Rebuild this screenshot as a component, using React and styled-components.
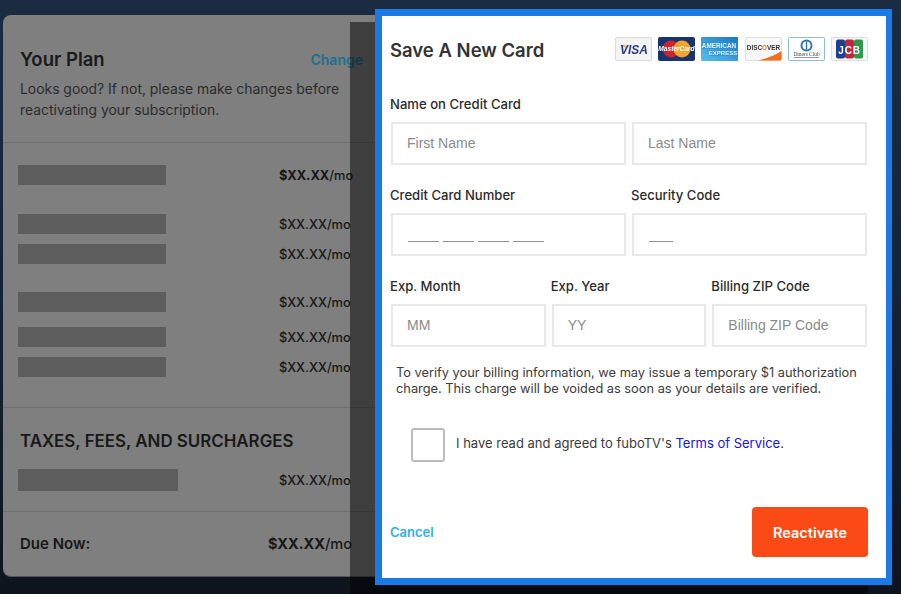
import React from "react";
import styled, { createGlobalStyle } from "styled-components";

const Global = createGlobalStyle`
  html, body {
    margin: 0;
    padding: 0;
    height: 594px;
    overflow: hidden;
    background: #131f2e;
  }
  * { box-sizing: border-box; }
`;

const Page = styled.div`
  position: relative;
  width: 901px;
  height: 594px;
  overflow: hidden;
  padding: 15px 0 0 3px;
  background: linear-gradient(180deg, #1b2c42 0%, #16243a 45%, #0d141e 100%);
  font-family: Inter, Lato, sans-serif;
`;

const PlanCard = styled.section`
  width: 400px;
  height: 562px;
  background: #7f7f7f;
  border-radius: 8px;
  border-bottom: 1px solid #555;
  color: #1b1b1b;
`;

const PlanHead = styled.div`
  height: 128px;
  padding: 29px 37px 0 17px;
  border-bottom: 1px solid #6f6f6f;
`;

const HeadRow = styled.div`
  display: flex;
  justify-content: space-between;
  align-items: center;
  height: 30px;
`;

const PlanTitle = styled.h2`
  margin: 0;
  font-size: 18.5px;
  font-weight: 600;
  color: #1a1a1a;
`;

const ChangeLink = styled.a`
  font-size: 14px;
  font-weight: 600;
  color: #1c7190;
  margin-right: 3px;
`;

const PlanNote = styled.p`
  margin: 5px 0 0;
  width: 340px;
  font-size: 13.9px;
  line-height: 21px;
  color: #2c2c2c;
`;

const Lines = styled.div`
  height: 265px;
  padding-top: 22px;
  border-bottom: 1px solid #6f6f6f;
`;

const Line = styled.div`
  display: flex;
  justify-content: space-between;
  align-items: center;
  height: 20px;
  margin-top: ${({ $top }) => $top || 0}px;
  padding: 0 46px 0 15px;
`;

const Redacted = styled.div`
  width: ${({ $width }) => $width || 148}px;
  height: ${({ $height }) => $height || 20}px;
  background: #5d5d5d;
`;

const Price = styled.span`
  width: 78px;
  white-space: nowrap;
  font-size: 12.8px;
  font-weight: 500;
  color: #161616;
`;

const Amount = styled.span`
  font-weight: ${({ $bold }) => ($bold ? 700 : 500)};
`;

const Taxes = styled.div`
  height: 104px;
  padding-top: 21px;
  border-bottom: 1px solid #6f6f6f;
`;

const TaxTitle = styled.h3`
  margin: 0 0 17px;
  padding-left: 17px;
  font-size: 16.9px;
  line-height: 24px;
  font-weight: 600;
  color: #191919;
`;

const DueRow = styled.div`
  display: flex;
  justify-content: space-between;
  align-items: center;
  padding: 22px 46px 0 17px;
  font-size: 15px;
  font-weight: 600;
  color: #171717;
`;

const DuePrice = styled.span`
  width: 89px;
  white-space: nowrap;
  font-size: 14.5px;
  font-weight: 500;
`;

const Shade = styled.div`
  position: absolute;
  left: 350px;
  top: 22px;
  width: 518px;
  bottom: 0;
  background: rgba(0, 0, 0, 0.5);
`;

const Modal = styled.div`
  position: absolute;
  left: 375px;
  top: 9px;
  width: 517px;
  height: 576px;
  border: solid #1a7ae8;
  border-width: 7px 6px 7px 7px;
  background: #fff;
  padding: 0 19px 0 8px;
  color: #2e2e2e;
`;

const ModalHead = styled.header`
  display: flex;
  justify-content: space-between;
  align-items: center;
  height: 68px;
  margin-right: -1px;
`;

const ModalTitle = styled.h2`
  margin: 0;
  font-size: 18.5px;
  font-weight: 600;
  color: #333;
`;

const Logos = styled.div`
  display: flex;
  gap: 6.2px;
  margin-top: -3px;
`;

const FormRow = styled.div`
  display: grid;
  grid-template-columns: repeat(${({ $cols }) => $cols}, 1fr);
  gap: 6px;
  height: 91px;
  padding-left: 1px;
`;

const Field = styled.label`
  display: flex;
  flex-direction: column;
  font-size: 13.1px;
  font-weight: 500;
  color: #2b2b2b;
`;

const FieldLabel = styled.span`
  height: 38px;
  line-height: 40px;
  margin-left: -1px;
  white-space: nowrap;
`;

const Input = styled.div`
  height: 43px;
  display: flex;
  align-items: center;
  gap: 4px;
  padding: 0 0 2px 14px;
  border: 2px solid #e8e8e8;
  background: #fff;
  font-family: "Liberation Sans", Arial, sans-serif;
  font-size: 14px;
  font-weight: 400;
  color: #8a8a8a;
`;

const Dash = styled.i`
  display: block;
  width: ${({ $width }) => $width || 31}px;
  height: 1px;
  margin-top: 15px;
  background: #8f8f8f;
  &:first-child { margin-left: 1px; }
`;

const Notice = styled.p`
  margin: 8px 0 0 6px;
  font-size: 12.8px;
  line-height: 16px;
  color: #3b3b3b;
`;

const Agree = styled.div`
  display: flex;
  align-items: center;
  gap: 11px;
  margin: 31px 0 0 21px;
  font-size: 13px;
  color: #3b3b3b;
`;

const AgreeText = styled.span`
  margin-top: -4px;
`;

const Box = styled.span`
  width: 34px;
  height: 34px;
  border: 2px solid #bdbdbd;
  border-radius: 3px;
`;

const TermsLink = styled.a`
  color: #1414e6;
`;

const Footer = styled.footer`
  display: flex;
  justify-content: space-between;
  align-items: center;
  margin-top: 45px;
  margin-right: -1px;
`;

const CancelLink = styled.a`
  font-size: 13px;
  font-weight: 600;
  color: #2db1ea;
`;

const Reactivate = styled.button`
  width: 116px;
  height: 50px;
  border: 0;
  border-radius: 4px;
  background: #fc4a16;
  color: #fff;
  font-family: inherit;
  font-size: 14.5px;
  font-weight: 600;
`;

const Logo = styled.svg`
  display: block;
  width: 37px;
  height: 24px;
  filter: blur(0.3px);
`;

const logoFont = "Liberation Sans, sans-serif";

const VisaLogo = () => (
  <Logo viewBox="0 0 37 24">
    <rect x="0.5" y="0.5" width="36" height="23" rx="1.5" fill="#f4f4f4" stroke="#d9d9d9" />
    <path d="M5 8h5l1 3z" fill="#e9a52f" />
    <text x="19" y="17" textAnchor="middle" fontFamily={logoFont} fontSize="12" fontWeight="700" fontStyle="italic" fill="#2b3a86">VISA</text>
  </Logo>
);

const MasterLogo = () => (
  <Logo viewBox="0 0 37 24">
    <rect width="37" height="24" rx="2" fill="#17346f" />
    <circle cx="13" cy="12" r="8.5" fill="#d4202b" />
    <circle cx="24" cy="12" r="8.5" fill="#f4a32c" />
    <text x="18.5" y="14" textAnchor="middle" fontFamily={logoFont} fontSize="6.6" fontWeight="700" fontStyle="italic" fill="#fff">MasterCard</text>
  </Logo>
);

const AmexLogo = () => (
  <Logo viewBox="0 0 37 24">
    <defs>
      <linearGradient id="amex" x1="0" y1="1" x2="1" y2="0">
        <stop offset="0" stopColor="#5cc0ee" />
        <stop offset="1" stopColor="#1478c4" />
      </linearGradient>
    </defs>
    <rect width="37" height="24" rx="1" fill="url(#amex)" />
    <rect x="1" y="5" width="33" height="7" fill="#2f8fd0" opacity="0.6" />
    <rect x="8" y="13" width="28" height="6" fill="#2f8fd0" opacity="0.6" />
    <text x="18" y="11" textAnchor="middle" fontFamily={logoFont} fontSize="6.4" fontWeight="700" fill="#dff2fd">AMERICAN</text>
    <text x="22" y="18" textAnchor="middle" fontFamily={logoFont} fontSize="6" fontWeight="700" fill="#dff2fd">EXPRESS</text>
  </Logo>
);

const DiscoverLogo = () => (
  <Logo viewBox="0 0 37 24">
    <rect x="0.5" y="0.5" width="36" height="23" rx="1.5" fill="#f8f8f8" stroke="#dedede" />
    <path d="M13 23.5C24 21 32 17 36.5 14v8a1.5 1.5 0 0 1-1.5 1.5z" fill="#f0701f" />
    <text x="18.5" y="13" textAnchor="middle" fontFamily={logoFont} fontSize="6.4" fontWeight="700" fill="#333">DISC<tspan fill="#ee7a22">O</tspan>VER</text>
  </Logo>
);

const DinersLogo = () => (
  <Logo viewBox="0 0 37 24">
    <rect x="0.5" y="0.5" width="36" height="23" rx="1" fill="#fff" stroke="#8bbbdc" />
    <circle cx="18.5" cy="8.5" r="6" fill="#2f72b5" />
    <circle cx="18.5" cy="8.5" r="4" fill="#fff" />
    <rect x="17.8" y="4.5" width="1.4" height="8" fill="#2f72b5" />
    <text x="18.5" y="18.5" textAnchor="middle" fontFamily="Liberation Serif, serif" fontSize="5.4" fill="#444">Diners Club</text>
    <rect x="6" y="20" width="25" height="1" fill="#999" />
  </Logo>
);

const JcbLogo = () => (
  <Logo viewBox="0 0 37 24">
    <rect x="0.5" y="0.5" width="36" height="23" rx="1" fill="#f7f7f7" stroke="#dedede" />
    <rect x="5" y="2.5" width="9" height="19" rx="2" fill="#1d3f8f" />
    <rect x="14" y="2.5" width="9" height="19" rx="2" fill="#c8233c" />
    <rect x="23" y="2.5" width="9" height="19" rx="2" fill="#2c9a48" />
    <text x="18.5" y="16.5" textAnchor="middle" fontFamily={logoFont} fontSize="10" fontWeight="700" letterSpacing="0.8" fill="#fff">JCB</text>
  </Logo>
);

const lineRows = [
  { top: 0 },
  { top: 29 },
  { top: 10 },
  { top: 28 },
  { top: 15 },
  { top: 10 },
];

const App = () => (
  <Page>
    <Global />
    <PlanCard>
      <PlanHead>
        <HeadRow>
          <PlanTitle>Your Plan</PlanTitle>
          <ChangeLink>Change</ChangeLink>
        </HeadRow>
        <PlanNote>
          Looks good? If not, please make changes before reactivating your
          subscription.
        </PlanNote>
      </PlanHead>
      <Lines>
        {lineRows.map((row, i) => (
          <Line key={i} $top={row.top}>
            <Redacted />
            <Price>
              <Amount $bold={i === 0}>$XX.XX</Amount>/mo
            </Price>
          </Line>
        ))}
      </Lines>
      <Taxes>
        <TaxTitle>TAXES, FEES, AND SURCHARGES</TaxTitle>
        <Line>
          <Redacted $width={160} $height={22} />
          <Price>
            <Amount>$XX.XX</Amount>/mo
          </Price>
        </Line>
      </Taxes>
      <DueRow>
        <span>Due Now:</span>
        <DuePrice>
          <Amount $bold>$XX.XX</Amount>/mo
        </DuePrice>
      </DueRow>
    </PlanCard>
    <Shade />
    <Modal>
      <ModalHead>
        <ModalTitle>Save A New Card</ModalTitle>
        <Logos>
          <VisaLogo />
          <MasterLogo />
          <AmexLogo />
          <DiscoverLogo />
          <DinersLogo />
          <JcbLogo />
        </Logos>
      </ModalHead>
      <FormRow $cols={2}>
        <Field>
          <FieldLabel>Name on Credit Card</FieldLabel>
          <Input>First Name</Input>
        </Field>
        <Field>
          <FieldLabel>&nbsp;</FieldLabel>
          <Input>Last Name</Input>
        </Field>
      </FormRow>
      <FormRow $cols={2}>
        <Field>
          <FieldLabel>Credit Card Number</FieldLabel>
          <Input>
            <Dash />
            <Dash />
            <Dash />
            <Dash />
          </Input>
        </Field>
        <Field>
          <FieldLabel>Security Code</FieldLabel>
          <Input>
            <Dash $width={24} />
          </Input>
        </Field>
      </FormRow>
      <FormRow $cols={3}>
        <Field>
          <FieldLabel>Exp. Month</FieldLabel>
          <Input>MM</Input>
        </Field>
        <Field>
          <FieldLabel>Exp. Year</FieldLabel>
          <Input>YY</Input>
        </Field>
        <Field>
          <FieldLabel>Billing ZIP Code</FieldLabel>
          <Input>Billing ZIP Code</Input>
        </Field>
      </FormRow>
      <Notice>
        To verify your billing information, we may issue a temporary $1
        authorization charge. This charge will be voided as soon as your details
        are verified.
      </Notice>
      <Agree>
        <Box />
        <AgreeText>
          I have read and agreed to fuboTV's{" "}
          <TermsLink>Terms of Service</TermsLink>.
        </AgreeText>
      </Agree>
      <Footer>
        <CancelLink>Cancel</CancelLink>
        <Reactivate>Reactivate</Reactivate>
      </Footer>
    </Modal>
  </Page>
);

export default App;
